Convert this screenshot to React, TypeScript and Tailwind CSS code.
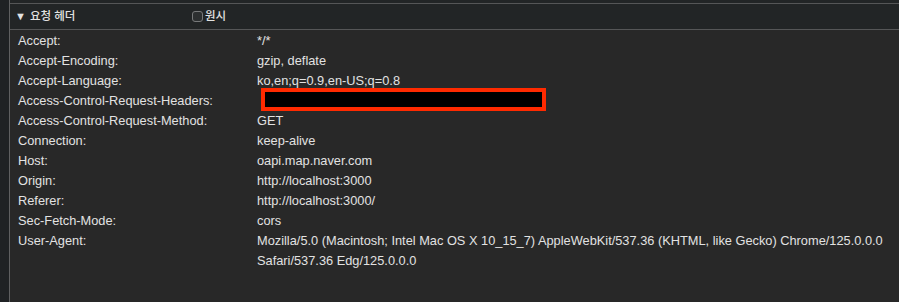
const headers: [string, string][] = [
  ["Accept:", "*/*"],
  ["Accept-Encoding:", "gzip, deflate"],
  ["Accept-Language:", "ko,en;q=0.9,en-US;q=0.8"],
  ["Access-Control-Request-Headers:", ""],
  ["Access-Control-Request-Method:", "GET"],
  ["Connection:", "keep-alive"],
  ["Host:", "oapi.map.naver.com"],
  ["Origin:", "http://localhost:3000"],
  ["Referer:", "http://localhost:3000/"],
  ["Sec-Fetch-Mode:", "cors"],
];

export default function App() {
  return (
    <div
      className="flex h-[302px] w-[899px] overflow-hidden bg-[#282828] text-[12.8px] text-[#e2e2e2]"
      style={{ fontFamily: '"Liberation Sans", "Noto Sans CJK KR", sans-serif' }}
    >
      {/* left gutter */}
      <div className="w-[9px] shrink-0 bg-[#1f2224]" />
      <div className="w-px shrink-0 bg-[#5f6061]" />

      <div className="flex min-w-0 flex-1 flex-col">
        <div className="h-[3px] bg-[#222526]" />
        <div className="h-px bg-[#555657]" />
        {/* section header */}
        <div className="flex h-[25px] items-center bg-[#222526] pl-[5px]">
          <span className="flex w-[177px] items-center gap-[4px]">
            <span className="text-[11px]">▼</span>
            <span className="text-[11.5px] font-medium">요청 헤더</span>
          </span>
          <span className="flex items-center gap-[2px]">
            <span className="h-[11px] w-[11px] rounded-[3px] border border-[#77797a] bg-[#2c2f30]" />
            <span className="text-[11.5px] font-medium">원시</span>
          </span>
        </div>
        <div className="h-px bg-[#555657]" />

        {/* header rows */}
        <div className="flex flex-col pt-px pl-[8px]">
          {headers.map(([k, v]) => (
            <div key={k} className="flex h-[20px] items-center leading-[20px]">
              <span className="w-[239px] shrink-0">{k}</span>
              {k.startsWith("Access-Control-Request-Headers") ? (
                <span className="relative h-[20px] w-0">
                  <span className="absolute left-[4px] top-[-3px] h-[23px] w-[285px] border-[4px] border-[#ff2a00] bg-black" />
                </span>
              ) : (
                <span>{v}</span>
              )}
            </div>
          ))}
          <div className="flex leading-[20px]">
            <span className="w-[239px] shrink-0">User-Agent:</span>
            <span className="flex flex-col">
              <span className="whitespace-nowrap">
                Mozilla/5.0 (Macintosh; Intel Mac OS X 10_15_7) AppleWebKit/537.36 (KHTML, like Gecko) Chrome/125.0.0.0
              </span>
              <span className="whitespace-nowrap">Safari/537.36 Edg/125.0.0.0</span>
            </span>
          </div>
        </div>
      </div>
    </div>
  );
}
